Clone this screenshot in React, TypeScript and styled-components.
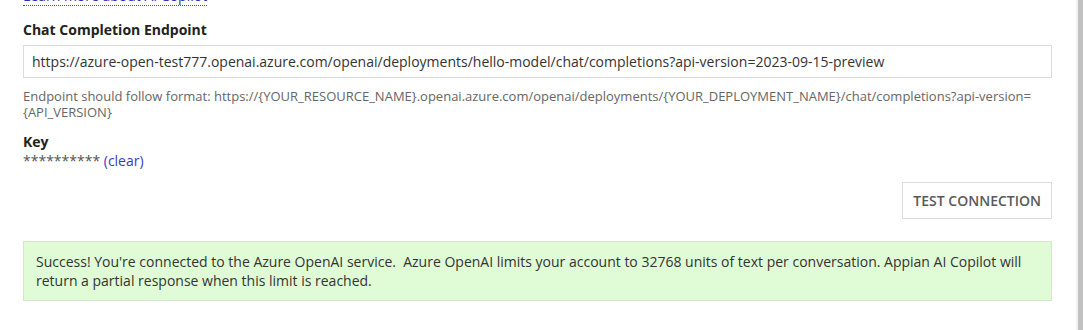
import React, { ReactElement } from 'react';
import styled, { createGlobalStyle } from 'styled-components';

const GlobalStyle = createGlobalStyle`
  html, body {
    margin: 0;
    padding: 0;
    background: #fff;
  }
  body {
    font-family: 'Open Sans', 'Noto Sans', sans-serif;
    color: #333;
  }
`;

const endpoint =
  'https://azure-open-test777.openai.azure.com/openai/deployments/hello-model/chat/completions?api-version=2023-09-15-preview';

export default function App(): ReactElement {
  return (
    <>
      <GlobalStyle />
      <StyledPage>
        <StyledForm>
          <StyledLearnMore href="#">Learn more about AI Copilot</StyledLearnMore>

          <StyledField>
            <StyledLabel>Chat Completion Endpoint</StyledLabel>
            <StyledInput type="text" value={endpoint} readOnly />
            <StyledHelp>
              Endpoint should follow format: https://{'{YOUR_RESOURCE_NAME}'}.openai.azure.com/openai/deployments/
              {'{YOUR_DEPLOYMENT_NAME}'}/chat/completions?api-version=
              <wbr />
              {'{API_VERSION}'}
            </StyledHelp>
          </StyledField>

          <StyledField>
            <StyledLabel className="key">Key</StyledLabel>
            <StyledSecret>
              ********** <StyledLink href="#">(clear)</StyledLink>
            </StyledSecret>
          </StyledField>

          <StyledActions>
            <StyledButton type="button">Test Connection</StyledButton>
          </StyledActions>

          <StyledSuccess>
            Success! You're connected to the Azure OpenAI service.&nbsp; Azure OpenAI limits your account to 32768
            units of text per conversation. Appian AI Copilot will return a partial response when this limit is
            reached.
          </StyledSuccess>
        </StyledForm>
        <StyledScrollbar>
          <div className="thumb" />
        </StyledScrollbar>
      </StyledPage>
    </>
  );
}

const StyledPage = styled.div`
  display: flex;
  height: 330px;
  overflow: hidden;
`;

const StyledForm = styled.div`
  flex: 1;
  padding: 0 24px 0 23px;
  display: flex;
  flex-direction: column;
`;

const StyledLearnMore = styled.a`
  display: block;
  width: fit-content;
  margin-top: -13px;
  font-size: 14px;
  line-height: 18px;
  color: #2f2fb8;
  text-decoration: none;
  border-bottom: 1px dotted #555;
`;

const StyledField = styled.div`
  display: flex;
  flex-direction: column;
`;

const StyledLabel = styled.div`
  margin-top: 14px;
  font-size: 14px;
  font-weight: 700;
  line-height: 20px;
  color: #222;

  &.key {
    margin-top: 12px;
  }
`;

const StyledInput = styled.input`
  box-sizing: border-box;
  margin-top: 5px;
  height: 33px;
  width: 100%;
  padding: 0 8px;
  border: 1px solid #dcdcdc;
  font-family: inherit;
  font-size: 14px;
  color: #333;
  outline: none;
`;

const StyledHelp = styled.div`
  margin-top: 10px;
  font-size: 13px;
  line-height: 16px;
  color: #666;
`;

const StyledSecret = styled.div`
  font-size: 14px;
  line-height: 18px;
  color: #555;
`;

const StyledLink = styled.a`
  color: #3b3bc0;
  text-decoration: none;
`;

const StyledActions = styled.div`
  display: flex;
  justify-content: flex-end;
  margin-top: 12px;
`;

const StyledButton = styled.button`
  height: 37px;
  padding: 0 10px;
  background: #fff;
  border: 1px solid #dcdcdc;
  font-family: inherit;
  font-size: 14px;
  font-weight: 600;
  color: #5a5a5a;
  text-transform: uppercase;
`;

const StyledSuccess = styled.div`
  margin-top: 22px;
  padding: 10px 12px;
  background: #e0fcd6;
  border: 1px solid #d5e6cd;
  font-size: 14px;
  line-height: 19px;
  color: #333;
`;

const StyledScrollbar = styled.div`
  width: 7px;
  background: #f1f1f1;
  display: flex;
  justify-content: flex-end;

  .thumb {
    width: 5px;
    height: 100%;
    background: #c1c1c1;
  }
`;
